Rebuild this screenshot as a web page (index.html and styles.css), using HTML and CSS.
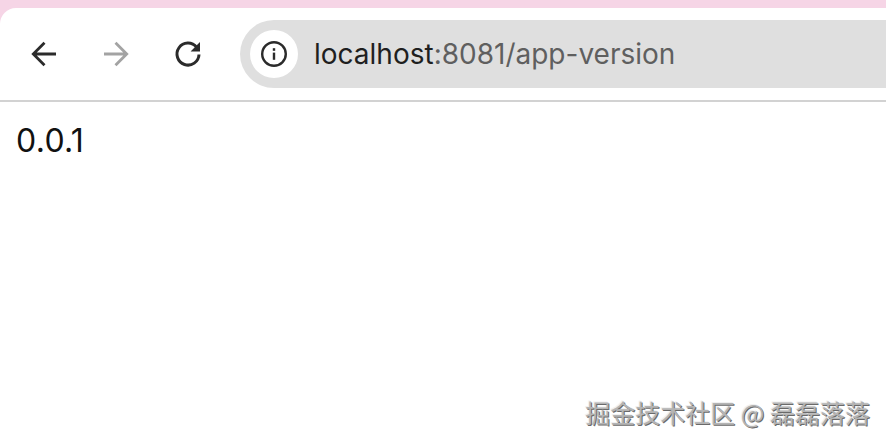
FILE: index.html
```html
<!DOCTYPE html>
<html lang="zh-CN">
<head>
    <meta charset="UTF-8">
    <meta name="viewport" content="width=device-width, initial-scale=1.0">
    <title>app-version</title>
    <link rel="stylesheet" href="styles.css">
</head>
<body>
    <div class="window">
        <div class="toolbar">
            <div class="nav-btn">
                <svg width="32" height="32" viewBox="0 0 32 32" fill="none" stroke="#2b2b2b" stroke-width="2.8">
                    <path d="M28 16H6M16.5 4.8L5.3 16l11.2 11.2"/>
                </svg>
            </div>
            <div class="nav-btn">
                <svg width="32" height="32" viewBox="0 0 32 32" fill="none" stroke="#a3a3a3" stroke-width="2.8">
                    <path d="M4 16h22M15.5 4.8L26.7 16 15.5 27.2"/>
                </svg>
            </div>
            <div class="nav-btn">
                <svg width="32" height="32" viewBox="0 0 32 32" fill="none">
                    <path d="M24.6 9.2A11 11 0 1 0 27 16.5" stroke="#2b2b2b" stroke-width="3"/>
                    <path d="M28 4V13.4H18.6z" fill="#2b2b2b"/>
                </svg>
            </div>
            <div class="address-bar">
                <div class="site-info">
                    <svg width="28" height="28" viewBox="0 0 28 28" fill="none">
                        <circle cx="14" cy="14" r="11.8" stroke="#2b2b2b" stroke-width="2.4"/>
                        <rect x="12.8" y="12.6" width="2.4" height="7.2" fill="#2b2b2b"/>
                        <rect x="12.8" y="8.2" width="2.4" height="2.6" fill="#2b2b2b"/>
                    </svg>
                </div>
                <div class="url"><span class="host">localhost</span>:8081/app-version</div>
            </div>
        </div>
        <div class="content">0.0.1</div>
    </div>
    <div class="watermark">掘金技术社区 @ 磊磊落落</div>
</body>
</html>
```

FILE: styles.css
```css
html, body {
    height: 100%;
}
body {
    margin: 0;
    background-color: #f6d5e6;
    font-family: Inter, "Noto Sans CJK SC", sans-serif;
    overflow: hidden;
}
.window {
    display: flex;
    flex-direction: column;
    height: calc(100% - 8px);
    margin-top: 8px;
    background-color: white;
    border-top-left-radius: 16px;
}
.toolbar {
    display: flex;
    align-items: center;
    height: 92px;
    padding-left: 8px;
    border-bottom: 2px solid #d2d2d2;
}
.nav-btn {
    display: flex;
    align-items: center;
    justify-content: center;
    width: 72px;
    height: 72px;
}
.address-bar {
    display: flex;
    align-items: center;
    flex: 1;
    height: 68px;
    margin-left: 16px;
    padding-left: 10px;
    background-color: #dfdfdf;
    border-radius: 34px 0 0 34px;
}
.site-info {
    display: flex;
    align-items: center;
    justify-content: center;
    width: 48px;
    height: 48px;
    background-color: white;
    border-radius: 50%;
}
.url {
    margin-left: 16px;
    font-size: 28px;
    color: #5f5f5f;
}
.host {
    color: #1f1f1f;
}
.content {
    padding: 19px 16px;
    font-size: 32px;
    letter-spacing: 0.3px;
    color: #111;
}
.watermark {
    position: absolute;
    right: 16px;
    bottom: 16px;
    font-family: "Noto Sans CJK SC", sans-serif;
    font-size: 25px;
    line-height: 32px;
    color: #b4b4b4;
    text-shadow: 1px 1px 0 #6a6a6a, -1px -1px 0 #f0f0f0;
}
```
